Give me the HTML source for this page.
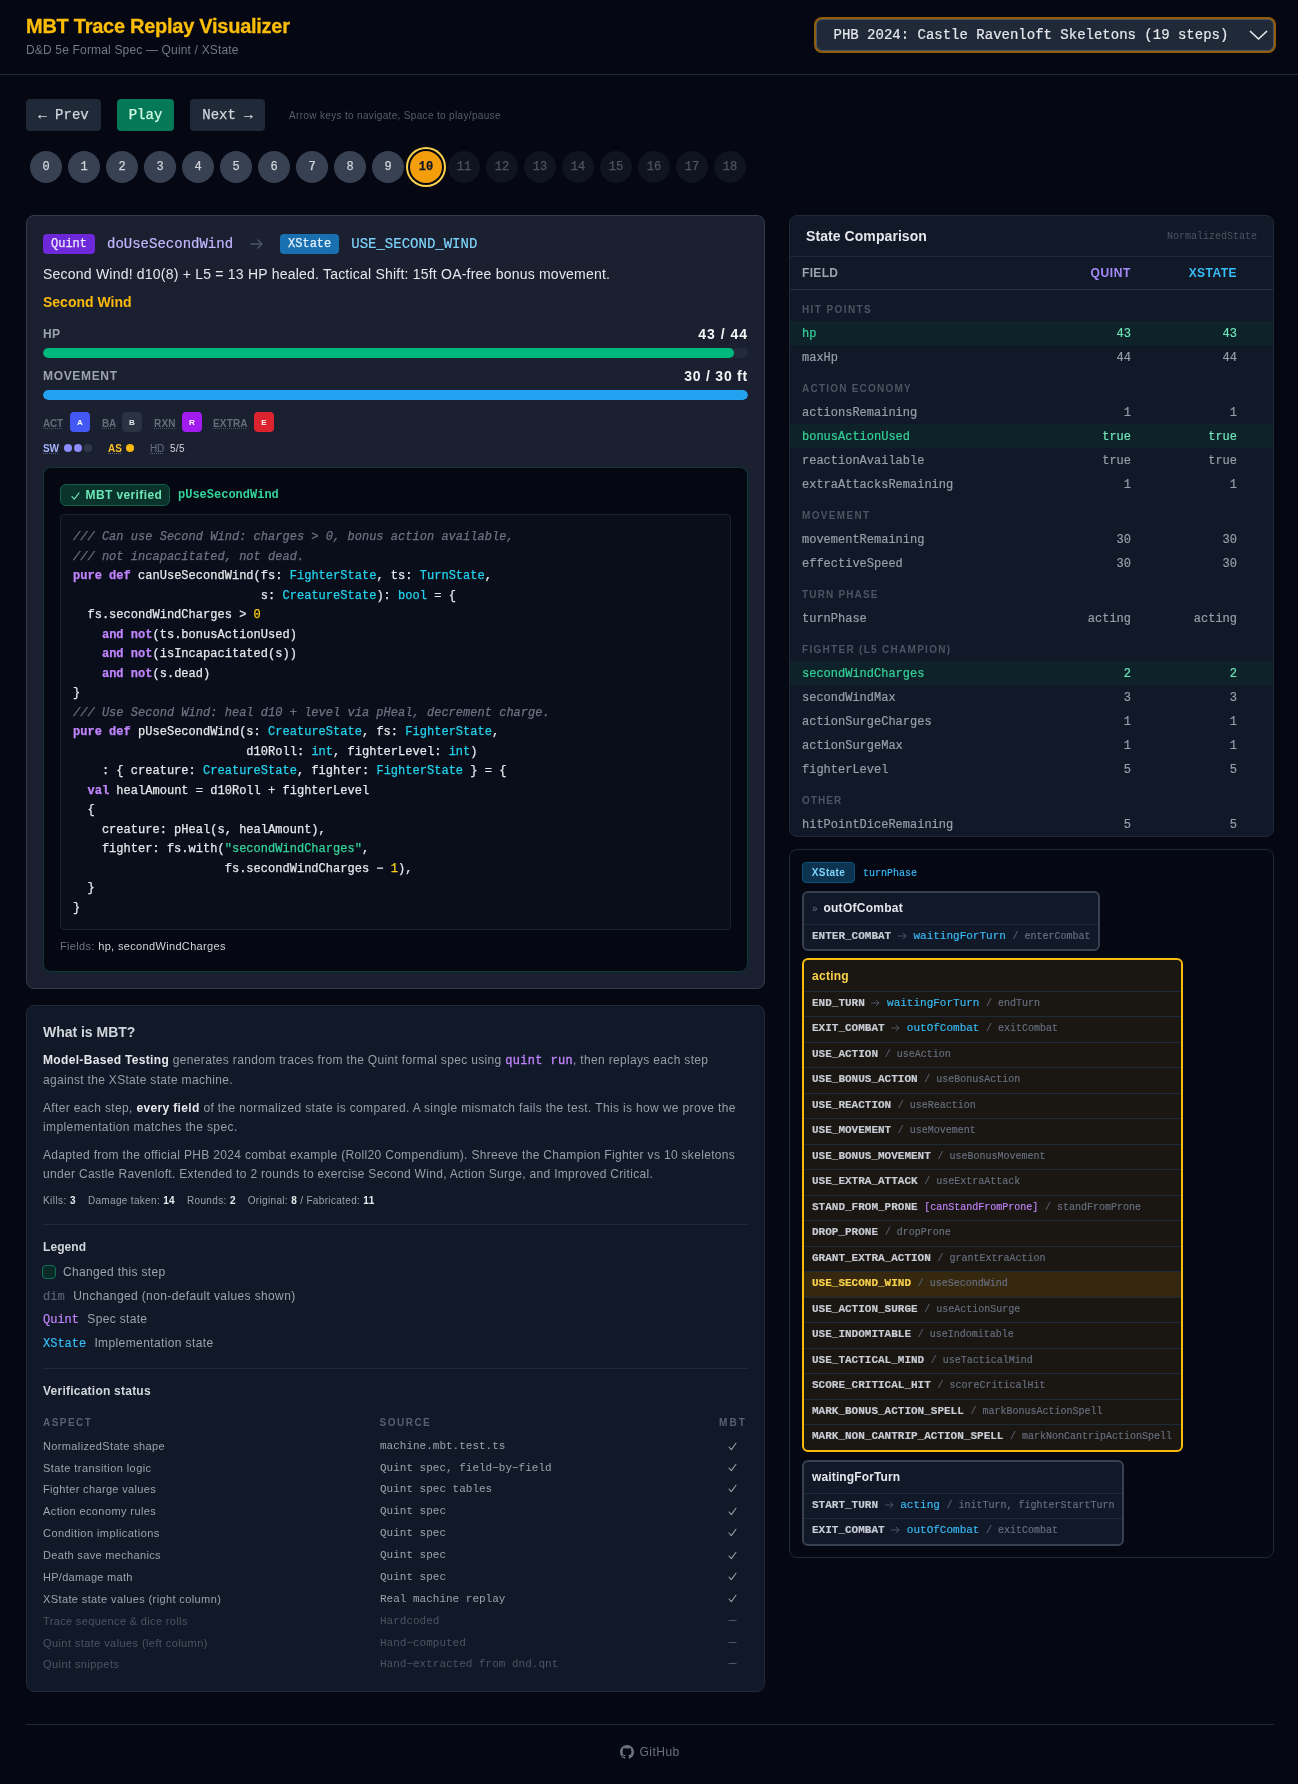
<!DOCTYPE html>
<html lang="en">
<head>
<meta charset="utf-8">
<title>MBT Trace Replay Visualizer</title>
<style>
*{box-sizing:border-box;margin:0;padding:0}
html,body{width:1298px;height:1784px;overflow:hidden}
body{background:#050713;color:#d1d5db;font-family:"Liberation Sans",sans-serif;font-size:12px;position:relative}
#root{position:absolute;left:0;top:0;width:1298px;height:1784px;will-change:transform}
.mono{font-family:"Liberation Mono",monospace}
.abs{position:absolute}
/* header */
#hdr{position:absolute;left:0;top:0;width:1298px;height:75px;border-bottom:1px solid #1f2937}
#title{position:absolute;left:26px;top:13px;font-size:20px;line-height:26px;font-weight:700;color:#fbbd08;white-space:nowrap;letter-spacing:0;-webkit-text-stroke:0.3px}
#sub{position:absolute;left:26px;top:41px;font-size:12px;line-height:18px;color:#717888;white-space:nowrap}
#sel{position:absolute;left:816px;top:18.5px;width:458px;height:32.5px;border:1px solid #4b5563;box-shadow:0 0 0 2px #925d0a;border-radius:6px;background:#1f2937;color:#e5e7eb;font-family:"Liberation Mono",monospace;font-size:14px;line-height:30.5px;padding-left:16.5px;white-space:nowrap;-webkit-text-stroke:0.2px}
#sel svg{position:absolute;right:3px;top:9px}
/* controls */
.btn{position:absolute;top:99px;height:32px;border-radius:4px;background:#1f2937;color:#d1d5db;font-family:"Liberation Mono",monospace;font-size:14px;line-height:33.5px;text-align:center;white-space:nowrap;-webkit-text-stroke:0.25px}
#hint{position:absolute;left:289px;top:109px;font-size:10px;line-height:14px;color:#555e6d;white-space:nowrap}
.st{position:absolute;top:151px;width:32px;height:32px;border-radius:16px;background:#374151;color:#d1d5db;font-family:"Liberation Mono",monospace;font-size:12px;line-height:33.5px;text-align:center;-webkit-text-stroke:0.25px}
.st.f{background:#10141f;color:#4b5563}
.st.cur{background:#f59e0b;color:#111827;font-weight:700;box-shadow:0 0 0 2px #050713,0 0 0 4px #fcd34d}
/* panels */
.panel{position:absolute;border:1px solid #1f2937;border-radius:8px;background:#111827}
#p1{left:26px;top:215px;width:739px;height:774px;background:#1b2030;border-color:#333c4e}
.badge{display:inline-block;font-family:"Liberation Mono",monospace;font-size:12px;line-height:17px;height:20px;-webkit-text-stroke:0.25px;padding:2px 8px;border-radius:4px;font-weight:400}

/* p1 content */
#p1 .row1{position:absolute;left:16px;top:16px;height:24px;display:flex;align-items:center;white-space:nowrap}
#p1 .row1 .fn{font-family:"Liberation Mono",monospace;font-size:14px;line-height:25px;-webkit-text-stroke:0.2px}
#desc{position:absolute;left:16px;top:47px;font-size:14px;line-height:22px;color:#e5e7eb;white-space:nowrap}
#feat{position:absolute;left:16px;top:75px;font-size:14px;line-height:22px;color:#fbb90d;font-weight:700;white-space:nowrap}
.lbl{position:absolute;left:16px;font-size:12px;line-height:16px;font-weight:700;color:#9ca3af;letter-spacing:.6px;white-space:nowrap}
.val{position:absolute;right:16px;font-size:14px;line-height:16px;font-weight:700;color:#f3f4f6;white-space:nowrap}
.track{position:absolute;left:16px;width:705px;height:10px;border-radius:5px;background:#232a3a;overflow:hidden}
.track i{display:block;height:10px;border-radius:5px}
.eco{position:absolute;top:197.5px;height:20px;font-size:10px;line-height:20px;color:#656d7b;font-weight:700;letter-spacing:.5px;white-space:nowrap}
.eco u{text-decoration:underline dotted #4b5563;text-underline-offset:1px}
.sq{position:absolute;top:196px;width:20px;height:20px;border-radius:4px;color:#fff;font-size:8px;font-weight:700;line-height:21px;text-align:center}
.r2{position:absolute;top:224.5px;font-size:10px;line-height:16px;font-weight:700;white-space:nowrap;letter-spacing:.2px}
.r2 u{text-decoration:underline dotted #5b6478;text-underline-offset:1px}
.dot{position:absolute;top:228px;width:8px;height:8px;border-radius:4px}
#mbt{position:absolute;left:16px;top:251px;width:705px;height:505px;border:1px solid #0a3b33;border-radius:8px;background:#050713}
#ver{position:absolute;left:16px;top:16px;height:22px;width:110px;border:1px solid #0f5f4b;background:#0a332b;border-radius:6px;color:#6ee7b7;font-size:12px;font-weight:700;line-height:20px;white-space:nowrap}
#ver svg{position:absolute;left:10px;top:6px}
#ver span{position:absolute;left:24.5px;top:0}
#pfn{position:absolute;left:134px;top:17px;font-family:"Liberation Mono",monospace;font-size:12px;font-weight:700;line-height:20px;color:#34d399}
#code{letter-spacing:0.022px;position:absolute;left:16px;top:46px;width:671px;height:416px;border:1px solid #1a2130;border-radius:4px;background:#0a0e1a;padding:13px 12px 11px;-webkit-text-stroke:0.25px;font-family:"Liberation Mono",monospace;font-size:12px;line-height:19.5px;color:#e5e7eb;white-space:pre}
#code .c{color:#6b7280;font-style:italic}
#code .k{color:#c084fc;font-weight:700}
#code .t{color:#22d3ee}
#code .n{color:#facc15}
#code .s{color:#34d399}
#flds{position:absolute;left:16px;top:470px;font-size:11px;line-height:16px;color:#6b7280;white-space:nowrap}
#flds b{font-weight:400;color:#d1d5db}

/* p2 */
#p2{left:26px;top:1005px;width:739px;height:687px}
#p2 .h{position:absolute;left:16px;font-weight:700;color:#d1d5db;white-space:nowrap}
#p2 .p{position:absolute;left:16px;font-size:12px;line-height:19.5px;color:#969dab;white-space:nowrap}
#p2 .p b{color:#e5e7eb}
#p2 .p code{font-family:"Liberation Mono",monospace;color:#c084fc;font-size:12px;-webkit-text-stroke:0.3px}
#stats{position:absolute;left:16px;top:1188px;font-size:10px;line-height:14px;color:#9ca3af;white-space:nowrap}
#stats b{color:#e5e7eb}
#stats span{position:absolute;top:0;white-space:nowrap}
.hr{position:absolute;left:16px;width:705px;height:1px;background:#1f2937}
.lg{position:absolute;left:16px;font-size:12px;line-height:16px;color:#9ca3af;white-space:nowrap}
.lg .m{font-family:"Liberation Mono",monospace;position:absolute;left:0;top:1px;-webkit-text-stroke:0.2px}
.lg .x{position:absolute;top:0}
.vt{position:absolute;font-size:11px;line-height:14px;white-space:nowrap}
.vt.a{left:16px;color:#9ca3af}
.vt.s{left:353px;color:#9ca3af;font-family:"Liberation Mono",monospace}
.vt.m{left:695.6px;width:20px;text-align:center;color:#9ca3af}
.vt.d{color:#4b5563}
.vh{position:absolute;top:410px;font-size:10px;line-height:14px;font-weight:700;color:#566070;letter-spacing:1px;white-space:nowrap}

/* p3 */
#p3{left:789px;top:215px;width:485px;height:622px;overflow:hidden}
#p3 .tt{position:absolute;left:16px;top:10px;font-size:14px;line-height:20px;font-weight:700;color:#e5e7eb;white-space:nowrap}
#p3 .ns{position:absolute;right:16px;top:13.5px;font-family:"Liberation Mono",monospace;font-size:10px;line-height:14px;color:#4b5563}
#p3 .l{position:absolute;left:0;width:483px;height:1px;background:#1f2937}
#p3 .th{position:absolute;top:49px;font-size:12px;line-height:16px;font-weight:700;letter-spacing:.6px;white-space:nowrap}
.sec{position:absolute;left:12px;font-size:10px;line-height:15px;font-weight:700;color:#4b5563;letter-spacing:1px;white-space:nowrap}
.tr{position:absolute;left:0;width:483px;height:24px;font-family:"Liberation Mono",monospace;font-size:12px;line-height:26.6px;color:#979eac;white-space:nowrap;-webkit-text-stroke:0.2px}
.tr span{position:absolute;top:0}
.tr .f{left:12px}
.tr .q{right:142px}
.tr .xs{right:36px}
.tr.ch{background:#0e2229}
.tr.ch .f{color:#34d399}
.tr.ch .q,.tr.ch .xs{color:#6ee7b7}
/* p4 */
#p4{left:789px;top:849px;width:485px;height:709px;background:#050713}
#xb{position:absolute;left:12px;top:12px;width:53px;height:21px;border:1px solid #0b5078;background:#0c3350;border-radius:4px;color:#7dd3fc;font-size:10px;font-weight:700;line-height:19px;text-align:center}
#tp{position:absolute;left:73px;top:16.5px;-webkit-text-stroke:0.15px;font-family:"Liberation Mono",monospace;font-size:10px;line-height:14px;color:#38bdf8}
.sb{position:absolute;left:12px;border:2px solid #374151;border-radius:6px;background:#111827;overflow:hidden}
.sb .hd{height:30.5px;padding:0 8px;font-size:12px;font-weight:700;line-height:30.5px;color:#e5e7eb;white-space:nowrap}
.sb .rw{height:25.5px;border-top:1px solid #1f2937;padding:0 8px;font-family:"Liberation Mono",monospace;font-size:11px;line-height:23.7px;color:#6b7280;white-space:nowrap;-webkit-text-stroke:0.15px}
.sb .rw b{color:#c8ccd5}
.sb .rw .to{color:#38bdf8}
.sb .rw .ac{font-size:10px;color:#677080}
.sb .rw .sl{font-size:10px;color:#566070}
.sb .rw .g{color:#c084fc;font-size:10px}
.sb .rw svg{vertical-align:-1px;margin:0}
.sb.act{border-color:#f9bc0c;background:#1a1611}
.sb.act .hd{color:#fcd34d;line-height:32px}
.sb.act .rw{border-top-color:#1f2a3d}
.sb .rw.hl{background:#35280f}
.sb .rw.hl b{color:#fcd34d}
#foot{position:absolute;left:26px;top:1724px;width:1248px;height:1px;background:#1f2937}
#gh{position:absolute;left:620px;top:1744px;font-size:12px;line-height:16px;color:#6b7280;white-space:nowrap}
#gh svg{position:absolute;left:0;top:1px}
#gh span{position:absolute;left:19.5px;top:0}
</style>
</head>
<body>
<div id="root">
<div id="hdr">
  <div id="title" style="letter-spacing:-0.264px">MBT Trace Replay Visualizer</div>
  <div id="sub" style="letter-spacing:0.169px">D&amp;D 5e Formal Spec — Quint / XState</div>
  <div id="sel">PHB 2024: Castle Ravenloft Skeletons (19 steps)<svg width="22" height="14" viewBox="0 0 22 14"><path d="M2.5 2.5 L10.5 10 L18.5 2.5" fill="none" stroke="#e5e7eb" stroke-width="1.7" stroke-linecap="round" stroke-linejoin="round"/></svg></div>
</div>
<div class="btn" style="left:26px;width:75px">← Prev</div>
<div class="btn" style="left:117px;width:57px;background:#047857;color:#d1fae5">Play</div>
<div class="btn" style="left:190px;width:75px">Next →</div>
<div id="hint" style="letter-spacing:0.337px">Arrow keys to navigate, Space to play/pause</div>
<div id="steps"><div class="st" style="left:30px">0</div><div class="st" style="left:68px">1</div><div class="st" style="left:106px">2</div><div class="st" style="left:144px">3</div><div class="st" style="left:182px">4</div><div class="st" style="left:220px">5</div><div class="st" style="left:258px">6</div><div class="st" style="left:296px">7</div><div class="st" style="left:334px">8</div><div class="st" style="left:372px">9</div><div class="st cur" style="left:410px">10</div><div class="st f" style="left:448px">11</div><div class="st f" style="left:486px">12</div><div class="st f" style="left:524px">13</div><div class="st f" style="left:562px">14</div><div class="st f" style="left:600px">15</div><div class="st f" style="left:638px">16</div><div class="st f" style="left:676px">17</div><div class="st f" style="left:714px">18</div></div>

<div class="panel" id="p1">
<div class="row1"><span class="badge" style="background:#6d28d9;color:#ede9fe">Quint</span><span class="fn" style="margin-left:12px;color:#c4b5fd">doUseSecondWind</span><svg style="margin:0 16px 0 17px" width="14" height="12" viewBox="0 0 14 12"><path d="M1 6 H12 M8 2 L12 6 L8 10" fill="none" stroke="#4b5563" stroke-width="1.5" stroke-linecap="round" stroke-linejoin="round"/></svg><span class="badge" style="background:#1a6fb0;color:#e0f2fe">XState</span><span class="fn" style="margin-left:12px;color:#7dd3fc">USE_SECOND_WIND</span></div>
<div id="desc" style="letter-spacing:0.215px">Second Wind! d10(8) + L5 = 13 HP healed. Tactical Shift: 15ft OA-free bonus movement.</div>
<div id="feat" style="letter-spacing:-0.005px">Second Wind</div>
<div class="lbl" style="letter-spacing:0.328px;top:110px">HP</div><div class="val" style="letter-spacing:0.979px;top:110px">43 / 44</div>
<div class="track" style="top:132px"><i style="width:691px;background:#00b77c"></i></div>
<div class="lbl" style="letter-spacing:0.665px;top:152px">MOVEMENT</div><div class="val" style="letter-spacing:0.774px;top:152px">30 / 30 ft</div>
<div class="track" style="top:174px"><i style="width:705px;background:#22a2f0"></i></div>
<div class="eco" style="left:16px"><u style="letter-spacing:-0.281px">ACT</u></div><div class="sq" style="left:43px;background:#4357f5">A</div>
<div class="eco" style="left:75px"><u style="letter-spacing:-0.153px">BA</u></div><div class="sq" style="left:95px;background:#2b3242;color:#e5e7eb">B</div>
<div class="eco" style="left:127px"><u style="letter-spacing:0.238px">RXN</u></div><div class="sq" style="left:155px;background:#a21cf0">R</div>
<div class="eco" style="left:186px"><u style="letter-spacing:0.148px">EXTRA</u></div><div class="sq" style="left:227px;background:#dc2430">E</div>
<div class="r2" style="left:16px;color:#a5b4fc"><u style="letter-spacing:-0.109px">SW</u></div><div class="dot" style="left:37px;background:#8b8cf8"></div><div class="dot" style="left:47px;background:#8b8cf8"></div><div class="dot" style="left:57px;background:#30384a"></div>
<div class="r2" style="left:81px;color:#fbbf24"><u style="letter-spacing:0.094px">AS</u></div><div class="dot" style="left:99px;background:#fbb90d"></div>
<div class="r2" style="left:123px;color:#6b7280;font-weight:400"><u style="letter-spacing:-0.153px">HD</u></div><div class="r2" style="letter-spacing:0.297px;left:143px;color:#d1d5db;font-weight:400">5/5</div>
<div id="mbt">
<div id="ver"><svg width="9" height="8" viewBox="0 0 10 9" style="margin-top:0.5px"><path d="M1 5.2 L3.6 8 L9 1" fill="none" stroke="#6ee7b7" stroke-width="1.2" stroke-linecap="round" stroke-linejoin="round"/></svg><span style="letter-spacing:0.389px">MBT verified</span></div><div id="pfn">pUseSecondWind</div>
<div id="code"><span class="c">/// Can use Second Wind: charges &gt; 0, bonus action available,</span>
<span class="c">/// not incapacitated, not dead.</span>
<span class="k">pure def</span> canUseSecondWind(fs: <span class="t">FighterState</span>, ts: <span class="t">TurnState</span>,
                          s: <span class="t">CreatureState</span>): <span class="t">bool</span> = {
  fs.secondWindCharges &gt; <span class="n">0</span>
    <span class="k">and not</span>(ts.bonusActionUsed)
    <span class="k">and not</span>(isIncapacitated(s))
    <span class="k">and not</span>(s.dead)
}
<span class="c">/// Use Second Wind: heal d10 + level via pHeal, decrement charge.</span>
<span class="k">pure def</span> pUseSecondWind(s: <span class="t">CreatureState</span>, fs: <span class="t">FighterState</span>,
                        d10Roll: <span class="t">int</span>, fighterLevel: <span class="t">int</span>)
    : { creature: <span class="t">CreatureState</span>, fighter: <span class="t">FighterState</span> } = {
  <span class="k">val</span> healAmount = d10Roll + fighterLevel
  {
    creature: pHeal(s, healAmount),
    fighter: fs.with(<span class="s">"secondWindCharges"</span>,
                     fs.secondWindCharges − <span class="n">1</span>),
  }
}</div>
<div id="flds" style="letter-spacing:0.342px">Fields: <b>hp, secondWindCharges</b></div>
</div>
</div>
<div class="panel" id="p2">
<div class="h" style="letter-spacing:-0.022px;top:16px;font-size:14px;line-height:20px">What is MBT?</div>
<div class="p" style="top:44.5px"><span style="letter-spacing:0.332px"><b>Model-Based Testing</b> generates random traces from the Quint formal spec using <code>quint run</code>, then replays each step</span><br><span style="letter-spacing:0.314px">against the XState state machine.</span></div>
<div class="p" style="top:92.5px"><span style="letter-spacing:0.355px">After each step, <b>every field</b> of the normalized state is compared. A single mismatch fails the test. This is how we prove the</span><br><span style="letter-spacing:0.391px">implementation matches the spec.</span></div>
<div class="p" style="top:139.5px"><span style="letter-spacing:0.325px">Adapted from the official PHB 2024 combat example (Roll20 Compendium). Shreeve the Champion Fighter vs 10 skeletons</span><br><span style="letter-spacing:0.313px">under Castle Ravenloft. Extended to 2 rounds to exercise Second Wind, Action Surge, and Improved Critical.</span></div>
<div id="stats" style="top:188px"><span style="letter-spacing:0.447px;left:0">Kills: <b>3</b></span><span style="letter-spacing:0.331px;left:44.9px">Damage taken: <b>14</b></span><span style="letter-spacing:0.376px;left:143.9px">Rounds: <b>2</b></span><span style="letter-spacing:0.341px;left:204.7px">Original: <b>8</b> / Fabricated: <b>11</b></span></div>
<div class="hr" style="top:218px"></div>
<div class="h" style="letter-spacing:0.066px;top:233px;font-size:12px;line-height:16px">Legend</div>
<div class="lg" style="top:258px"><span style="position:absolute;left:-1px;top:1px;width:14px;height:14px;border:1px solid #0d7457;background:#0a2a28;border-radius:4px"></span><span class="x" style="letter-spacing:0.342px;left:20px">Changed this step</span></div>
<div class="lg" style="top:282px"><span class="m" style="color:#586172">dim</span><span class="x" style="letter-spacing:0.374px;left:30.3px">Unchanged (non-default values shown)</span></div>
<div class="lg" style="top:305px"><span class="m" style="color:#c084fc">Quint</span><span class="x" style="letter-spacing:0.333px;left:44.3px">Spec state</span></div>
<div class="lg" style="top:329px"><span class="m" style="color:#38bdf8">XState</span><span class="x" style="letter-spacing:0.389px;left:51.4px">Implementation state</span></div>
<div class="hr" style="top:362px"></div>
<div class="h" style="letter-spacing:0.235px;top:377px;font-size:12px;line-height:16px">Verification status</div>
<div class="vh" style="letter-spacing:1.447px;left:16px">ASPECT</div><div class="vh" style="letter-spacing:1.501px;left:352.5px">SOURCE</div><div class="vh" style="letter-spacing:2.064px;left:692px">MBT</div>
<div class="vt a" style="letter-spacing:0.363px;top:433px">NormalizedState shape</div><div class="vt s" style="top:433px">machine.mbt.test.ts</div><div class="vt m" style="top:433px"><svg width="9" height="9" viewBox="0 0 9 9" style="vertical-align:-0.6px"><path d="M1 5 L3.3 7.6 L8 1.2" fill="none" stroke="#9aa1ad" stroke-width="1.05" stroke-linecap="round" stroke-linejoin="round"/></svg></div>
<div class="vt a" style="letter-spacing:0.43px;top:454.7px">State transition logic</div><div class="vt s" style="top:454.7px">Quint spec, field−by−field</div><div class="vt m" style="top:454.7px"><svg width="9" height="9" viewBox="0 0 9 9" style="vertical-align:-0.6px"><path d="M1 5 L3.3 7.6 L8 1.2" fill="none" stroke="#9aa1ad" stroke-width="1.05" stroke-linecap="round" stroke-linejoin="round"/></svg></div>
<div class="vt a" style="letter-spacing:0.351px;top:475.8px">Fighter charge values</div><div class="vt s" style="top:475.8px">Quint spec tables</div><div class="vt m" style="top:475.8px"><svg width="9" height="9" viewBox="0 0 9 9" style="vertical-align:-0.6px"><path d="M1 5 L3.3 7.6 L8 1.2" fill="none" stroke="#9aa1ad" stroke-width="1.05" stroke-linecap="round" stroke-linejoin="round"/></svg></div>
<div class="vt a" style="letter-spacing:0.401px;top:498px">Action economy rules</div><div class="vt s" style="top:498px">Quint spec</div><div class="vt m" style="top:498px"><svg width="9" height="9" viewBox="0 0 9 9" style="vertical-align:-0.6px"><path d="M1 5 L3.3 7.6 L8 1.2" fill="none" stroke="#9aa1ad" stroke-width="1.05" stroke-linecap="round" stroke-linejoin="round"/></svg></div>
<div class="vt a" style="letter-spacing:0.443px;top:519.7px">Condition implications</div><div class="vt s" style="top:519.7px">Quint spec</div><div class="vt m" style="top:519.7px"><svg width="9" height="9" viewBox="0 0 9 9" style="vertical-align:-0.6px"><path d="M1 5 L3.3 7.6 L8 1.2" fill="none" stroke="#9aa1ad" stroke-width="1.05" stroke-linecap="round" stroke-linejoin="round"/></svg></div>
<div class="vt a" style="letter-spacing:0.327px;top:542px">Death save mechanics</div><div class="vt s" style="top:542px">Quint spec</div><div class="vt m" style="top:542px"><svg width="9" height="9" viewBox="0 0 9 9" style="vertical-align:-0.6px"><path d="M1 5 L3.3 7.6 L8 1.2" fill="none" stroke="#9aa1ad" stroke-width="1.05" stroke-linecap="round" stroke-linejoin="round"/></svg></div>
<div class="vt a" style="letter-spacing:0.292px;top:563.6px">HP/damage math</div><div class="vt s" style="top:563.6px">Quint spec</div><div class="vt m" style="top:563.6px"><svg width="9" height="9" viewBox="0 0 9 9" style="vertical-align:-0.6px"><path d="M1 5 L3.3 7.6 L8 1.2" fill="none" stroke="#9aa1ad" stroke-width="1.05" stroke-linecap="round" stroke-linejoin="round"/></svg></div>
<div class="vt a" style="letter-spacing:0.386px;top:585.9px">XState state values (right column)</div><div class="vt s" style="top:585.9px">Real machine replay</div><div class="vt m" style="top:585.9px"><svg width="9" height="9" viewBox="0 0 9 9" style="vertical-align:-0.6px"><path d="M1 5 L3.3 7.6 L8 1.2" fill="none" stroke="#9aa1ad" stroke-width="1.05" stroke-linecap="round" stroke-linejoin="round"/></svg></div>
<div class="vt a d" style="letter-spacing:0.349px;top:608px">Trace sequence &amp; dice rolls</div><div class="vt s d" style="top:608px">Hardcoded</div><div class="vt m d" style="top:608px"><svg width="9" height="9" viewBox="0 0 9 9" style="vertical-align:0px"><path d="M0.5 4.5 H8.5" fill="none" stroke="#4b5563" stroke-width="1"/></svg></div>
<div class="vt a d" style="letter-spacing:0.412px;top:629.8px">Quint state values (left column)</div><div class="vt s d" style="top:629.8px">Hand−computed</div><div class="vt m d" style="top:629.8px"><svg width="9" height="9" viewBox="0 0 9 9" style="vertical-align:0px"><path d="M0.5 4.5 H8.5" fill="none" stroke="#4b5563" stroke-width="1"/></svg></div>
<div class="vt a d" style="letter-spacing:0.429px;top:650.9px">Quint snippets</div><div class="vt s d" style="top:650.9px">Hand−extracted from dnd.qnt</div><div class="vt m d" style="top:650.9px"><svg width="9" height="9" viewBox="0 0 9 9" style="vertical-align:0px"><path d="M0.5 4.5 H8.5" fill="none" stroke="#4b5563" stroke-width="1"/></svg></div>
</div>
<div class="panel" id="p3">
<div class="tt" style="letter-spacing:0.073px">State Comparison</div><div class="ns">NormalizedState</div>
<div class="l" style="top:40px"></div>
<div class="th" style="letter-spacing:0.332px;left:12px;color:#9ca3af">FIELD</div><div class="th" style="letter-spacing:0.639px;right:142px;color:#a78bfa">QUINT</div><div class="th" style="letter-spacing:0.467px;right:36px;color:#38bdf8">XSTATE</div>
<div class="l" style="top:73px;background:#2a3344"></div>
<div class="sec" style="letter-spacing:1.397px;top:86.0px">HIT POINTS</div>
<div class="tr ch" style="top:105.0px"><span class="f">hp</span><span class="q">43</span><span class="xs">43</span></div>
<div class="tr" style="top:129.0px"><span class="f">maxHp</span><span class="q">44</span><span class="xs">44</span></div>
<div class="sec" style="letter-spacing:1.217px;top:165.0px">ACTION ECONOMY</div>
<div class="tr" style="top:184.0px"><span class="f">actionsRemaining</span><span class="q">1</span><span class="xs">1</span></div>
<div class="tr ch" style="top:208.0px"><span class="f">bonusActionUsed</span><span class="q">true</span><span class="xs">true</span></div>
<div class="tr" style="top:232.0px"><span class="f">reactionAvailable</span><span class="q">true</span><span class="xs">true</span></div>
<div class="tr" style="top:256.0px"><span class="f">extraAttacksRemaining</span><span class="q">1</span><span class="xs">1</span></div>
<div class="sec" style="letter-spacing:1.331px;top:292.0px">MOVEMENT</div>
<div class="tr" style="top:311.0px"><span class="f">movementRemaining</span><span class="q">30</span><span class="xs">30</span></div>
<div class="tr" style="top:335.0px"><span class="f">effectiveSpeed</span><span class="q">30</span><span class="xs">30</span></div>
<div class="sec" style="letter-spacing:1.165px;top:371.0px">TURN PHASE</div>
<div class="tr" style="top:390.0px"><span class="f">turnPhase</span><span class="q">acting</span><span class="xs">acting</span></div>
<div class="sec" style="letter-spacing:1.294px;top:426.0px">FIGHTER (L5 CHAMPION)</div>
<div class="tr ch" style="top:445.0px"><span class="f">secondWindCharges</span><span class="q">2</span><span class="xs">2</span></div>
<div class="tr" style="top:469.0px"><span class="f">secondWindMax</span><span class="q">3</span><span class="xs">3</span></div>
<div class="tr" style="top:493.0px"><span class="f">actionSurgeCharges</span><span class="q">1</span><span class="xs">1</span></div>
<div class="tr" style="top:517.0px"><span class="f">actionSurgeMax</span><span class="q">1</span><span class="xs">1</span></div>
<div class="tr" style="top:541.0px"><span class="f">fighterLevel</span><span class="q">5</span><span class="xs">5</span></div>
<div class="sec" style="letter-spacing:1.05px;top:577.0px">OTHER</div>
<div class="tr" style="top:596.0px"><span class="f">hitPointDiceRemaining</span><span class="q">5</span><span class="xs">5</span></div>
</div>
<div class="panel" id="p4">
<div id="xb"><span style="letter-spacing:0.375px">XState</span></div><div id="tp">turnPhase</div>
<div class="sb" style="top:41px;width:298px"><div class="hd"><span style="color:#6b7280;font-weight:400;font-size:10px;margin-right:2.5px">»</span> <span style="letter-spacing:0.274px">outOfCombat</span></div><div class="rw"><b>ENTER_COMBAT</b> <svg width="9" height="8" viewBox="0 0 9 8"><path d="M0.5 4 H8 M5 1 L8 4 L5 7" fill="none" stroke="#4b5563" stroke-width="1" stroke-linecap="round" stroke-linejoin="round"/></svg> <span class="to">waitingForTurn</span> <span class="sl">/ </span><span class="ac">enterCombat</span></div></div>
<div class="sb act" style="top:108px;width:381px"><div class="hd"><span style="letter-spacing:0.271px">acting</span></div>
<div class="rw"><b>END_TURN</b> <svg width="9" height="8" viewBox="0 0 9 8"><path d="M0.5 4 H8 M5 1 L8 4 L5 7" fill="none" stroke="#4b5563" stroke-width="1" stroke-linecap="round" stroke-linejoin="round"/></svg> <span class="to">waitingForTurn</span> <span class="sl">/ </span><span class="ac">endTurn</span></div>
<div class="rw"><b>EXIT_COMBAT</b> <svg width="9" height="8" viewBox="0 0 9 8"><path d="M0.5 4 H8 M5 1 L8 4 L5 7" fill="none" stroke="#4b5563" stroke-width="1" stroke-linecap="round" stroke-linejoin="round"/></svg> <span class="to">outOfCombat</span> <span class="sl">/ </span><span class="ac">exitCombat</span></div>
<div class="rw"><b>USE_ACTION</b> <span class="sl">/ </span><span class="ac">useAction</span></div>
<div class="rw"><b>USE_BONUS_ACTION</b> <span class="sl">/ </span><span class="ac">useBonusAction</span></div>
<div class="rw"><b>USE_REACTION</b> <span class="sl">/ </span><span class="ac">useReaction</span></div>
<div class="rw"><b>USE_MOVEMENT</b> <span class="sl">/ </span><span class="ac">useMovement</span></div>
<div class="rw"><b>USE_BONUS_MOVEMENT</b> <span class="sl">/ </span><span class="ac">useBonusMovement</span></div>
<div class="rw"><b>USE_EXTRA_ATTACK</b> <span class="sl">/ </span><span class="ac">useExtraAttack</span></div>
<div class="rw"><b>STAND_FROM_PRONE</b> <span class="g">[canStandFromProne]</span> <span class="sl">/ </span><span class="ac">standFromProne</span></div>
<div class="rw"><b>DROP_PRONE</b> <span class="sl">/ </span><span class="ac">dropProne</span></div>
<div class="rw"><b>GRANT_EXTRA_ACTION</b> <span class="sl">/ </span><span class="ac">grantExtraAction</span></div>
<div class="rw hl"><b>USE_SECOND_WIND</b> <span class="sl">/ </span><span class="ac">useSecondWind</span></div>
<div class="rw"><b>USE_ACTION_SURGE</b> <span class="sl">/ </span><span class="ac">useActionSurge</span></div>
<div class="rw"><b>USE_INDOMITABLE</b> <span class="sl">/ </span><span class="ac">useIndomitable</span></div>
<div class="rw"><b>USE_TACTICAL_MIND</b> <span class="sl">/ </span><span class="ac">useTacticalMind</span></div>
<div class="rw"><b>SCORE_CRITICAL_HIT</b> <span class="sl">/ </span><span class="ac">scoreCriticalHit</span></div>
<div class="rw"><b>MARK_BONUS_ACTION_SPELL</b> <span class="sl">/ </span><span class="ac">markBonusActionSpell</span></div>
<div class="rw"><b>MARK_NON_CANTRIP_ACTION_SPELL</b> <span class="sl">/ </span><span class="ac">markNonCantripActionSpell</span></div>
</div>
<div class="sb" style="top:610px;width:322px"><div class="hd"><span style="letter-spacing:0.136px">waitingForTurn</span></div><div class="rw"><b>START_TURN</b> <svg width="9" height="8" viewBox="0 0 9 8"><path d="M0.5 4 H8 M5 1 L8 4 L5 7" fill="none" stroke="#4b5563" stroke-width="1" stroke-linecap="round" stroke-linejoin="round"/></svg> <span class="to">acting</span> <span class="sl">/ </span><span class="ac">initTurn, fighterStartTurn</span></div><div class="rw"><b>EXIT_COMBAT</b> <svg width="9" height="8" viewBox="0 0 9 8"><path d="M0.5 4 H8 M5 1 L8 4 L5 7" fill="none" stroke="#4b5563" stroke-width="1" stroke-linecap="round" stroke-linejoin="round"/></svg> <span class="to">outOfCombat</span> <span class="sl">/ </span><span class="ac">exitCombat</span></div></div>
</div>
<div id="foot"></div><div id="gh"><svg width="14" height="14" viewBox="0 0 16 16"><path fill="#6b7280" d="M8 0C3.58 0 0 3.58 0 8c0 3.54 2.29 6.53 5.47 7.59.4.07.55-.17.55-.38 0-.19-.01-.82-.01-1.49-2.01.37-2.53-.49-2.69-.94-.09-.23-.48-.94-.82-1.13-.28-.15-.68-.52-.01-.53.63-.01 1.08.58 1.23.82.72 1.21 1.87.87 2.33.66.07-.52.28-.87.51-1.07-1.78-.2-3.64-.89-3.64-3.95 0-.87.31-1.59.82-2.15-.08-.2-.36-1.02.08-2.12 0 0 .67-.21 2.2.82.64-.18 1.32-.27 2-.27s1.36.09 2 .27c1.53-1.04 2.2-.82 2.2-.82.44 1.1.16 1.92.08 2.12.51.56.82 1.27.82 2.15 0 3.07-1.87 3.75-3.65 3.95.29.25.54.73.54 1.48 0 1.07-.01 1.93-.01 2.2 0 .21.15.46.55.38A8.01 8.01 0 0 0 16 8c0-4.42-3.58-8-8-8z"/></svg><span style="letter-spacing:0.488px">GitHub</span></div>
</div>
</body>
</html>
